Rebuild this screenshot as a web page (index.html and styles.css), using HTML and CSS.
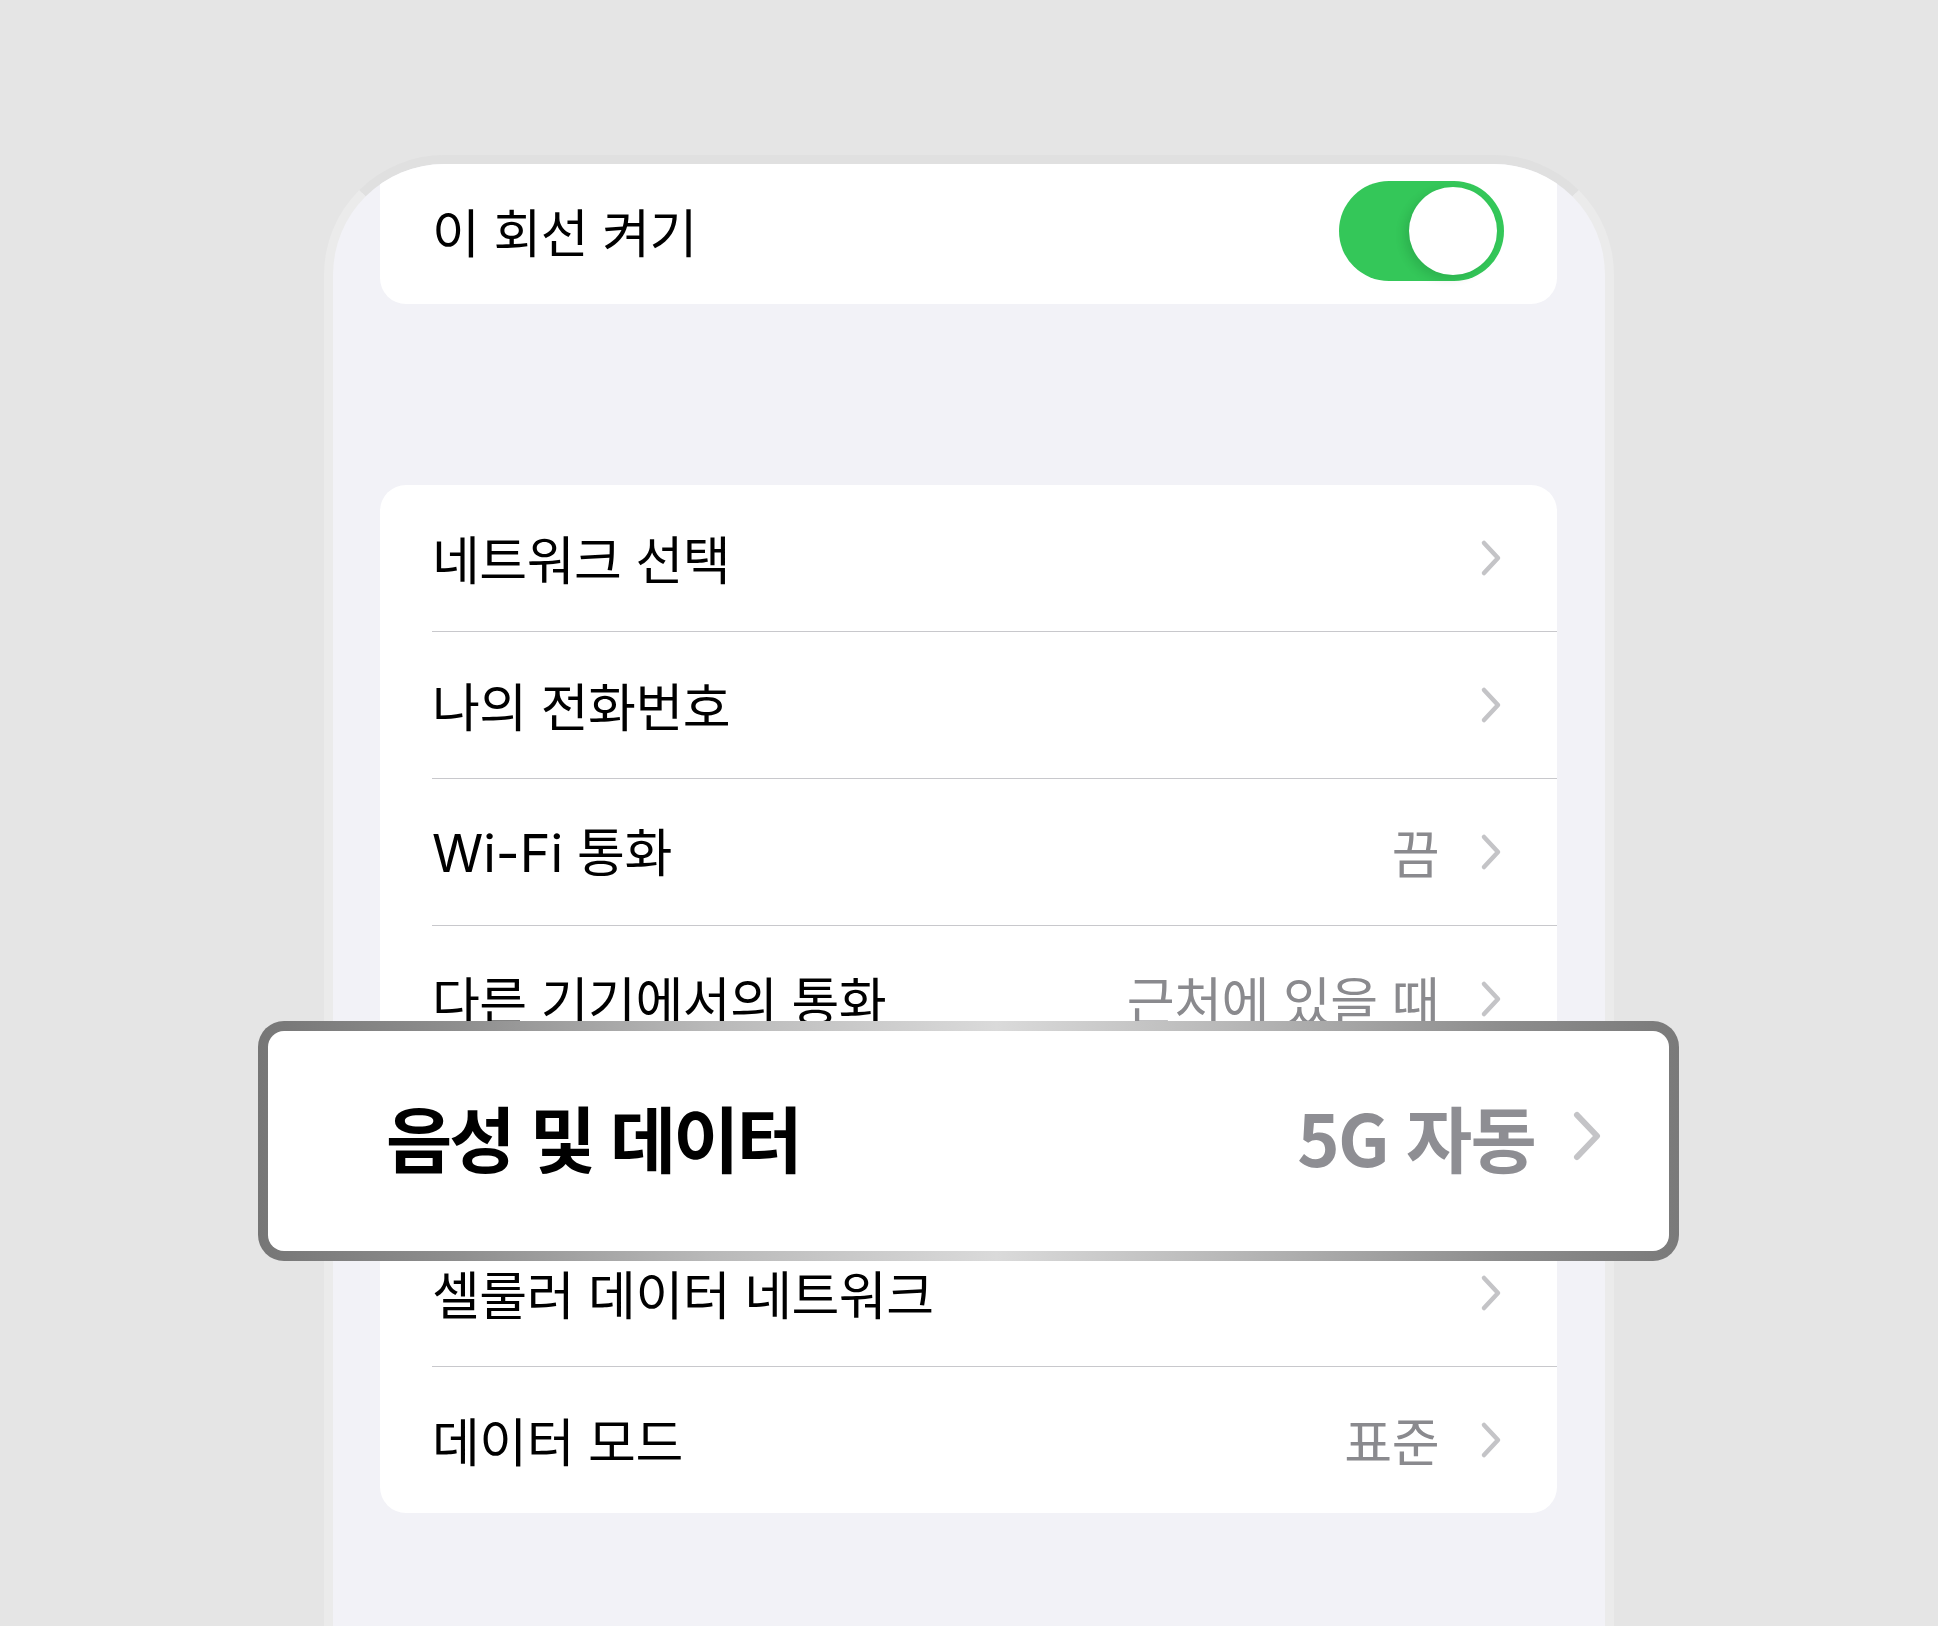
FILE: index.html
```html
<!DOCTYPE html>
<html lang="ko">
<head>
<meta charset="utf-8">
<title>셀룰러 설정</title>
<link rel="stylesheet" href="styles.css">
</head>
<body>
<div class="stage">
  <div class="phone">
    <div class="card card-top">
      <div class="row">
        <span class="label">이 회선 켜기</span>
        <span class="toggle"><span class="knob"></span></span>
      </div>
    </div>

    <div class="card card-list">
      <div class="row">
        <span class="label">네트워크 선택</span>
        <span class="trail"><svg class="chev" viewBox="0 0 22 38"><path d="M4 4 L18 19 L4 34"/></svg></span>
      </div>
      <div class="row">
        <span class="label">나의 전화번호</span>
        <span class="trail"><svg class="chev" viewBox="0 0 22 38"><path d="M4 4 L18 19 L4 34"/></svg></span>
      </div>
      <div class="row">
        <span class="label"><span class="latin">Wi-Fi</span> 통화</span>
        <span class="trail"><span class="value">끔</span><svg class="chev" viewBox="0 0 22 38"><path d="M4 4 L18 19 L4 34"/></svg></span>
      </div>
      <div class="row">
        <span class="label">다른 기기에서의 통화</span>
        <span class="trail"><span class="value">근처에 있을 때</span><svg class="chev" viewBox="0 0 22 38"><path d="M4 4 L18 19 L4 34"/></svg></span>
      </div>
      <div class="row">
        <span class="label">음성 및 데이터</span>
        <span class="trail"><span class="value">5G 자동</span><svg class="chev" viewBox="0 0 22 38"><path d="M4 4 L18 19 L4 34"/></svg></span>
      </div>
      <div class="row">
        <span class="label">셀룰러 데이터 네트워크</span>
        <span class="trail"><svg class="chev" viewBox="0 0 22 38"><path d="M4 4 L18 19 L4 34"/></svg></span>
      </div>
      <div class="row">
        <span class="label">데이터 모드</span>
        <span class="trail"><span class="value">표준</span><svg class="chev" viewBox="0 0 22 38"><path d="M4 4 L18 19 L4 34"/></svg></span>
      </div>
    </div>
  </div>

  <div class="highlight">
    <div class="highlight-inner">
      <span class="hl-label">음성 및 데이터</span>
      <span class="hl-trail"><span class="hl-value">5G 자동</span><svg class="hl-chev" viewBox="0 0 30 52"><path d="M5 5 L25 26 L5 47"/></svg></span>
    </div>
  </div>
</div>
</body>
</html>
```

FILE: styles.css
```css
html, body {
  margin: 0;
  padding: 0;
}

body {
  background: #e5e5e5;
  width: 1938px;
  height: 1626px;
  overflow: hidden;
  font-family: "Noto Sans CJK KR", "Noto Sans", sans-serif;
  -webkit-font-smoothing: antialiased;
}

.stage {
  position: relative;
  width: 1938px;
  height: 1626px;
  padding-top: 155px;
  box-sizing: border-box;
}

.phone {
  margin-left: 324px;
  width: 1290px;
  height: 1500px;
  box-sizing: border-box;
  border: 9px solid #ebebeb;
  border-top-color: #e0e0e0;
  border-bottom: none;
  border-radius: 120px 120px 0 0;
  background: #f2f2f7;
  overflow: hidden;
  padding: 0 48px 0 47px;
}

.card {
  background: #ffffff;
  border-radius: 26px;
  overflow: hidden;
}

.card-top {
  border-radius: 0 0 26px 26px;
}

.card-top .row {
  height: 140px;
  padding-bottom: 6px;
  padding-right: 53px;
}

.card-list {
  margin-top: 181px;
}

.row {
  display: flex;
  align-items: center;
  justify-content: space-between;
  height: 146px;
  box-sizing: border-box;
  margin-left: 52px;
  padding-right: 55px;
}

.card-list .row + .row {
  border-top: 1px solid #c8c8cc;
  height: 147px;
}

.label {
  font-size: 52px;
  letter-spacing: -0.5px;
  color: #000000;
  line-height: 1;
  white-space: nowrap;
}

.latin {
  font-family: "Inter", "Noto Sans", sans-serif;
  letter-spacing: 0;
}

.trail {
  display: flex;
  align-items: center;
  gap: 41px;
}

.value {
  font-size: 52px;
  letter-spacing: -0.5px;
  color: #8a8a8e;
  line-height: 1;
  white-space: nowrap;
}

.chev {
  width: 22px;
  height: 38px;
  display: block;
}

.chev path {
  fill: none;
  stroke: #c4c4c7;
  stroke-width: 4.5;
  stroke-linecap: round;
  stroke-linejoin: round;
}

.toggle {
  position: relative;
  width: 165px;
  height: 100px;
  border-radius: 50px;
  background: #34c759;
  flex: none;
}

.knob {
  position: absolute;
  right: 7px;
  top: 6px;
  width: 88px;
  height: 88px;
  border-radius: 50%;
  background: #ffffff;
  box-shadow: -5px 4px 10px rgba(0, 60, 20, 0.14);
}

.highlight {
  position: absolute;
  left: 258px;
  top: 1021px;
  width: 1421px;
  height: 240px;
  box-sizing: border-box;
  padding: 10px;
  border-radius: 26px;
  background: linear-gradient(90deg, #767676 0%, #8e8e8e 14%, #b9b9b9 32%, #dadada 52%, #b4b4b4 70%, #8c8c8c 88%, #7a7a7a 100%);
}

.highlight-inner {
  height: 100%;
  box-sizing: border-box;
  background: #ffffff;
  border-radius: 16px;
  display: flex;
  align-items: center;
  justify-content: space-between;
  padding: 0 67px 10px 118px;
}

.hl-label {
  font-size: 72px;
  font-weight: 700;
  letter-spacing: -3px;
  color: #000000;
  line-height: 1;
  white-space: nowrap;
}

.hl-trail {
  display: flex;
  align-items: center;
  gap: 37px;
}

.hl-value {
  font-size: 72px;
  font-weight: 700;
  letter-spacing: -1.8px;
  color: #8e8e93;
  line-height: 1;
  white-space: nowrap;
}

.hl-chev {
  width: 30px;
  height: 52px;
  display: block;
}

.hl-chev path {
  fill: none;
  stroke: #c4c4c7;
  stroke-width: 6;
  stroke-linecap: round;
  stroke-linejoin: round;
}
```
